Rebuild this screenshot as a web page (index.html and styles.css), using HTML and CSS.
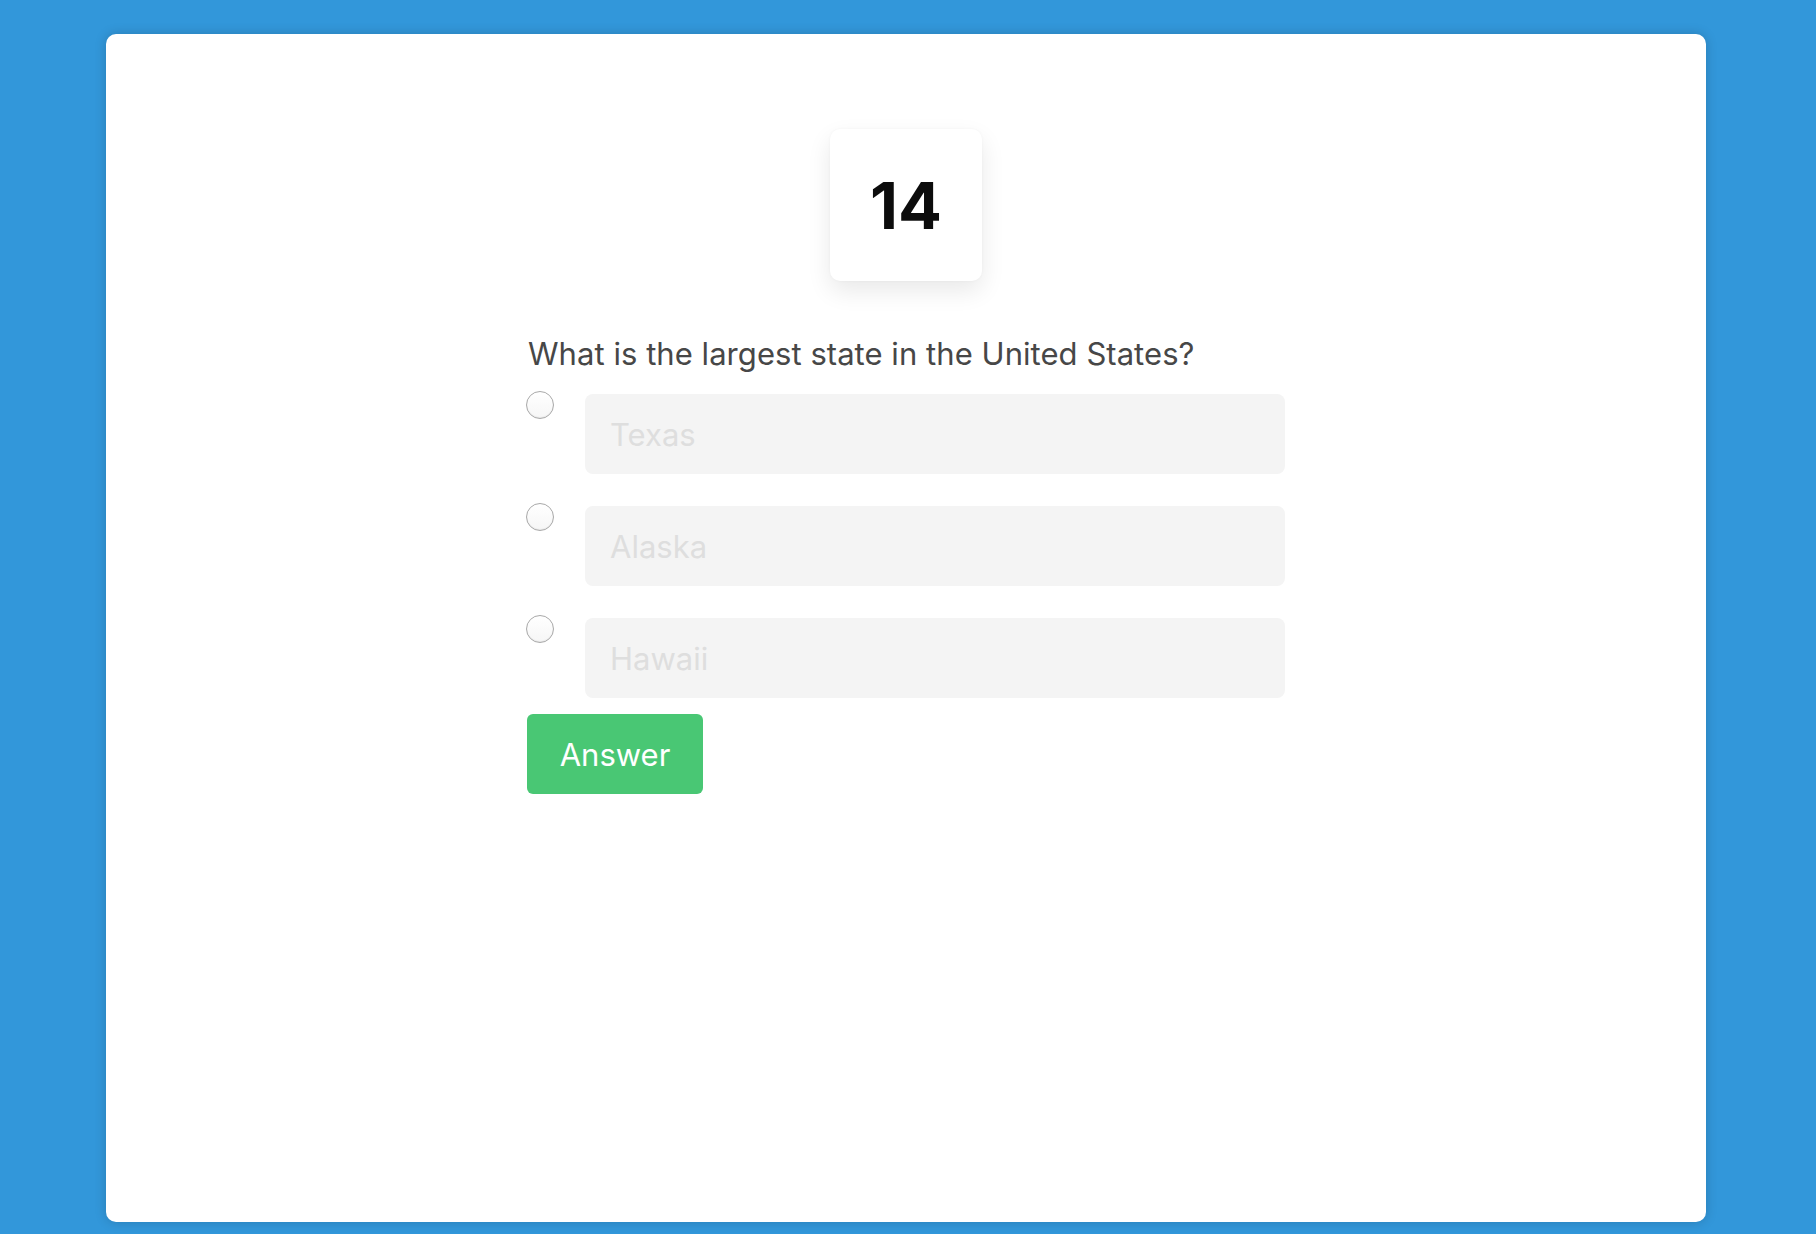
FILE: index.html
```html
<!DOCTYPE html>
<html lang="en">
<head>
<meta charset="utf-8">
<title>Quiz</title>
<link rel="stylesheet" href="styles.css">
</head>
<body>
<main class="card">
  <div class="counter">14</div>
  <form class="quiz">
    <p class="question">What is the largest state in the United States?</p>
    <div class="option">
      <input class="radio" type="radio" name="answer">
      <input class="field" type="text" placeholder="Texas">
    </div>
    <div class="option">
      <input class="radio" type="radio" name="answer">
      <input class="field" type="text" placeholder="Alaska">
    </div>
    <div class="option">
      <input class="radio" type="radio" name="answer">
      <input class="field" type="text" placeholder="Hawaii">
    </div>
    <button class="submit" type="button">Answer</button>
  </form>
</main>
</body>
</html>
```

FILE: styles.css
```css
html, body {
  margin: 0;
  padding: 0;
}

body {
  background: #3297da;
  font-family: Inter, Roboto, "Noto Sans", sans-serif;
  padding: 34px 0 12px 106px;
}

.card {
  box-sizing: border-box;
  width: 1600px;
  height: 1188px;
  background: #ffffff;
  border-radius: 10px;
  box-shadow: 0 0 12px rgba(0, 0, 0, 0.18);
  padding-top: 95px;
  display: flex;
  flex-direction: column;
  align-items: center;
}

.counter {
  width: 152px;
  height: 152px;
  border-radius: 10px;
  background: #fff;
  box-shadow: 0 10px 24px rgba(0, 0, 0, 0.09), 0 0 3px rgba(0, 0, 0, 0.04);
  display: flex;
  align-items: center;
  justify-content: center;
  font-size: 65px;
  font-weight: 700;
  color: #0c0c0c;
  letter-spacing: 0;
}

.quiz {
  width: 760px;
  margin: 0;
  display: flex;
  flex-direction: column;
  align-items: flex-start;
}

.question {
  margin: 53px 0 0 2px;
  font-size: 31px;
  letter-spacing: 0.05px;
  line-height: 40px;
  color: #474747;
}

.option {
  display: flex;
  align-items: flex-start;
  gap: 31px;
  margin-top: 17px;
}

.option + .option {
  margin-top: 29px;
}

.radio {
  appearance: none;
  -webkit-appearance: none;
  margin: 0;
  width: 28px;
  height: 28px;
  border-radius: 50%;
  border: 1px solid #a9a9a9;
  background: linear-gradient(#ffffff, #f6f6f6);
  box-shadow: inset 0 -1px 1px rgba(0, 0, 0, 0.06);
  box-sizing: border-box;
}

.field {
  box-sizing: border-box;
  width: 700px;
  height: 80px;
  margin-top: 3px;
  border: none;
  border-radius: 8px;
  background: #f4f4f4;
  padding: 0 25px;
  font-family: inherit;
  font-size: 31px;
  color: #333;
  outline: none;
}

.field::placeholder {
  color: #dedede;
}

.submit {
  margin: 16px 0 0 1px;
  width: 176px;
  height: 80px;
  border: none;
  border-radius: 6px;
  background: #49c774;
  color: #ffffff;
  font-family: inherit;
  font-size: 31px;
  padding: 0;
  cursor: pointer;
}
```
